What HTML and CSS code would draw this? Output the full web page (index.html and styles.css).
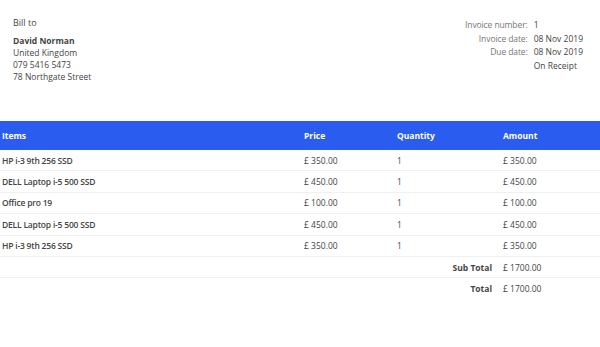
FILE: index.html
```html
<!DOCTYPE html>
<html>
<head>
<meta charset="utf-8">
<link rel="stylesheet" href="styles.css">
</head>
<body>
<div class="top">
  <div class="bill">
    <div class="bill-title">Bill to</div>
    <div class="name">David Norman</div>
    <div>United Kingdom</div>
    <div>079 5416 5473</div>
    <div>78 Northgate Street</div>
  </div>
  <div class="meta">
    <span class="label">Invoice number:</span><span>1</span>
    <span class="label">Invoice date:</span><span>08 Nov 2019</span>
    <span class="label">Due date:</span><span>08 Nov 2019</span>
    <span class="label"></span><span>On Receipt</span>
  </div>
</div>
<table class="items">
  <colgroup>
    <col class="c1"><col class="c2"><col class="c3"><col class="c4">
  </colgroup>
  <thead>
    <tr><th>Items</th><th>Price</th><th>Quantity</th><th>Amount</th></tr>
  </thead>
  <tbody>
    <tr><td class="item">HP i-3 9th 256 SSD</td><td>£ 350.00</td><td>1</td><td>£ 350.00</td></tr>
    <tr><td class="item">DELL Laptop i-5 500 SSD</td><td>£ 450.00</td><td>1</td><td>£ 450.00</td></tr>
    <tr><td class="item">Office pro 19</td><td>£ 100.00</td><td>1</td><td>£ 100.00</td></tr>
    <tr><td class="item">DELL Laptop i-5 500 SSD</td><td>£ 450.00</td><td>1</td><td>£ 450.00</td></tr>
    <tr><td class="item">HP i-3 9th 256 SSD</td><td>£ 350.00</td><td>1</td><td>£ 350.00</td></tr>
    <tr class="sum"><td colspan="3" class="sum-label">Sub Total</td><td>£ 1700.00</td></tr>
    <tr class="sum last"><td colspan="3" class="sum-label">Total</td><td>£ 1700.00</td></tr>
  </tbody>
</table>
</body>
</html>
```
FILE: styles.css
```css
html, body {
  margin: 0;
  padding: 0;
  background: #fff;
}
body {
  font-family: "Open Sans", "Liberation Sans", sans-serif;
  font-size: 8.5px;
  color: #444;
}
.top {
  display: flex;
  justify-content: space-between;
  padding: 17px 17px 0 13px;
}
.bill {
  line-height: 12px;
}
.bill-title {
  font-size: 9px;
  margin-bottom: 6px;
}
.name {
  font-weight: 700;
}
.meta {
  display: grid;
  grid-template-columns: auto auto;
  column-gap: 6px;
  line-height: 13.5px;
  align-content: start;
  padding-top: 1px;
}
.meta .label {
  text-align: right;
  color: #777;
  letter-spacing: -0.1px;
}
.items {
  width: 100%;
  margin-top: 38px;
  border-collapse: collapse;
  table-layout: fixed;
}
.c1 { width: 302px; }
.c2 { width: 93px; }
.c3 { width: 106px; }
.c4 { width: 99px; }
.items th {
  background: #2b5cf0;
  color: #fff;
  font-weight: 700;
  text-align: left;
  height: 29px;
  padding: 0 2px;
}
.items td {
  height: 20.4px;
  padding: 0 2px;
  border-bottom: 1px solid #f0f0f0;
}
.items td.item {
  font-weight: 600;
  letter-spacing: -0.2px;
}
.items tr.last td {
  border-bottom: none;
}
.items td.sum-label {
  text-align: right;
  font-weight: 700;
  padding-right: 9px;
}
```
